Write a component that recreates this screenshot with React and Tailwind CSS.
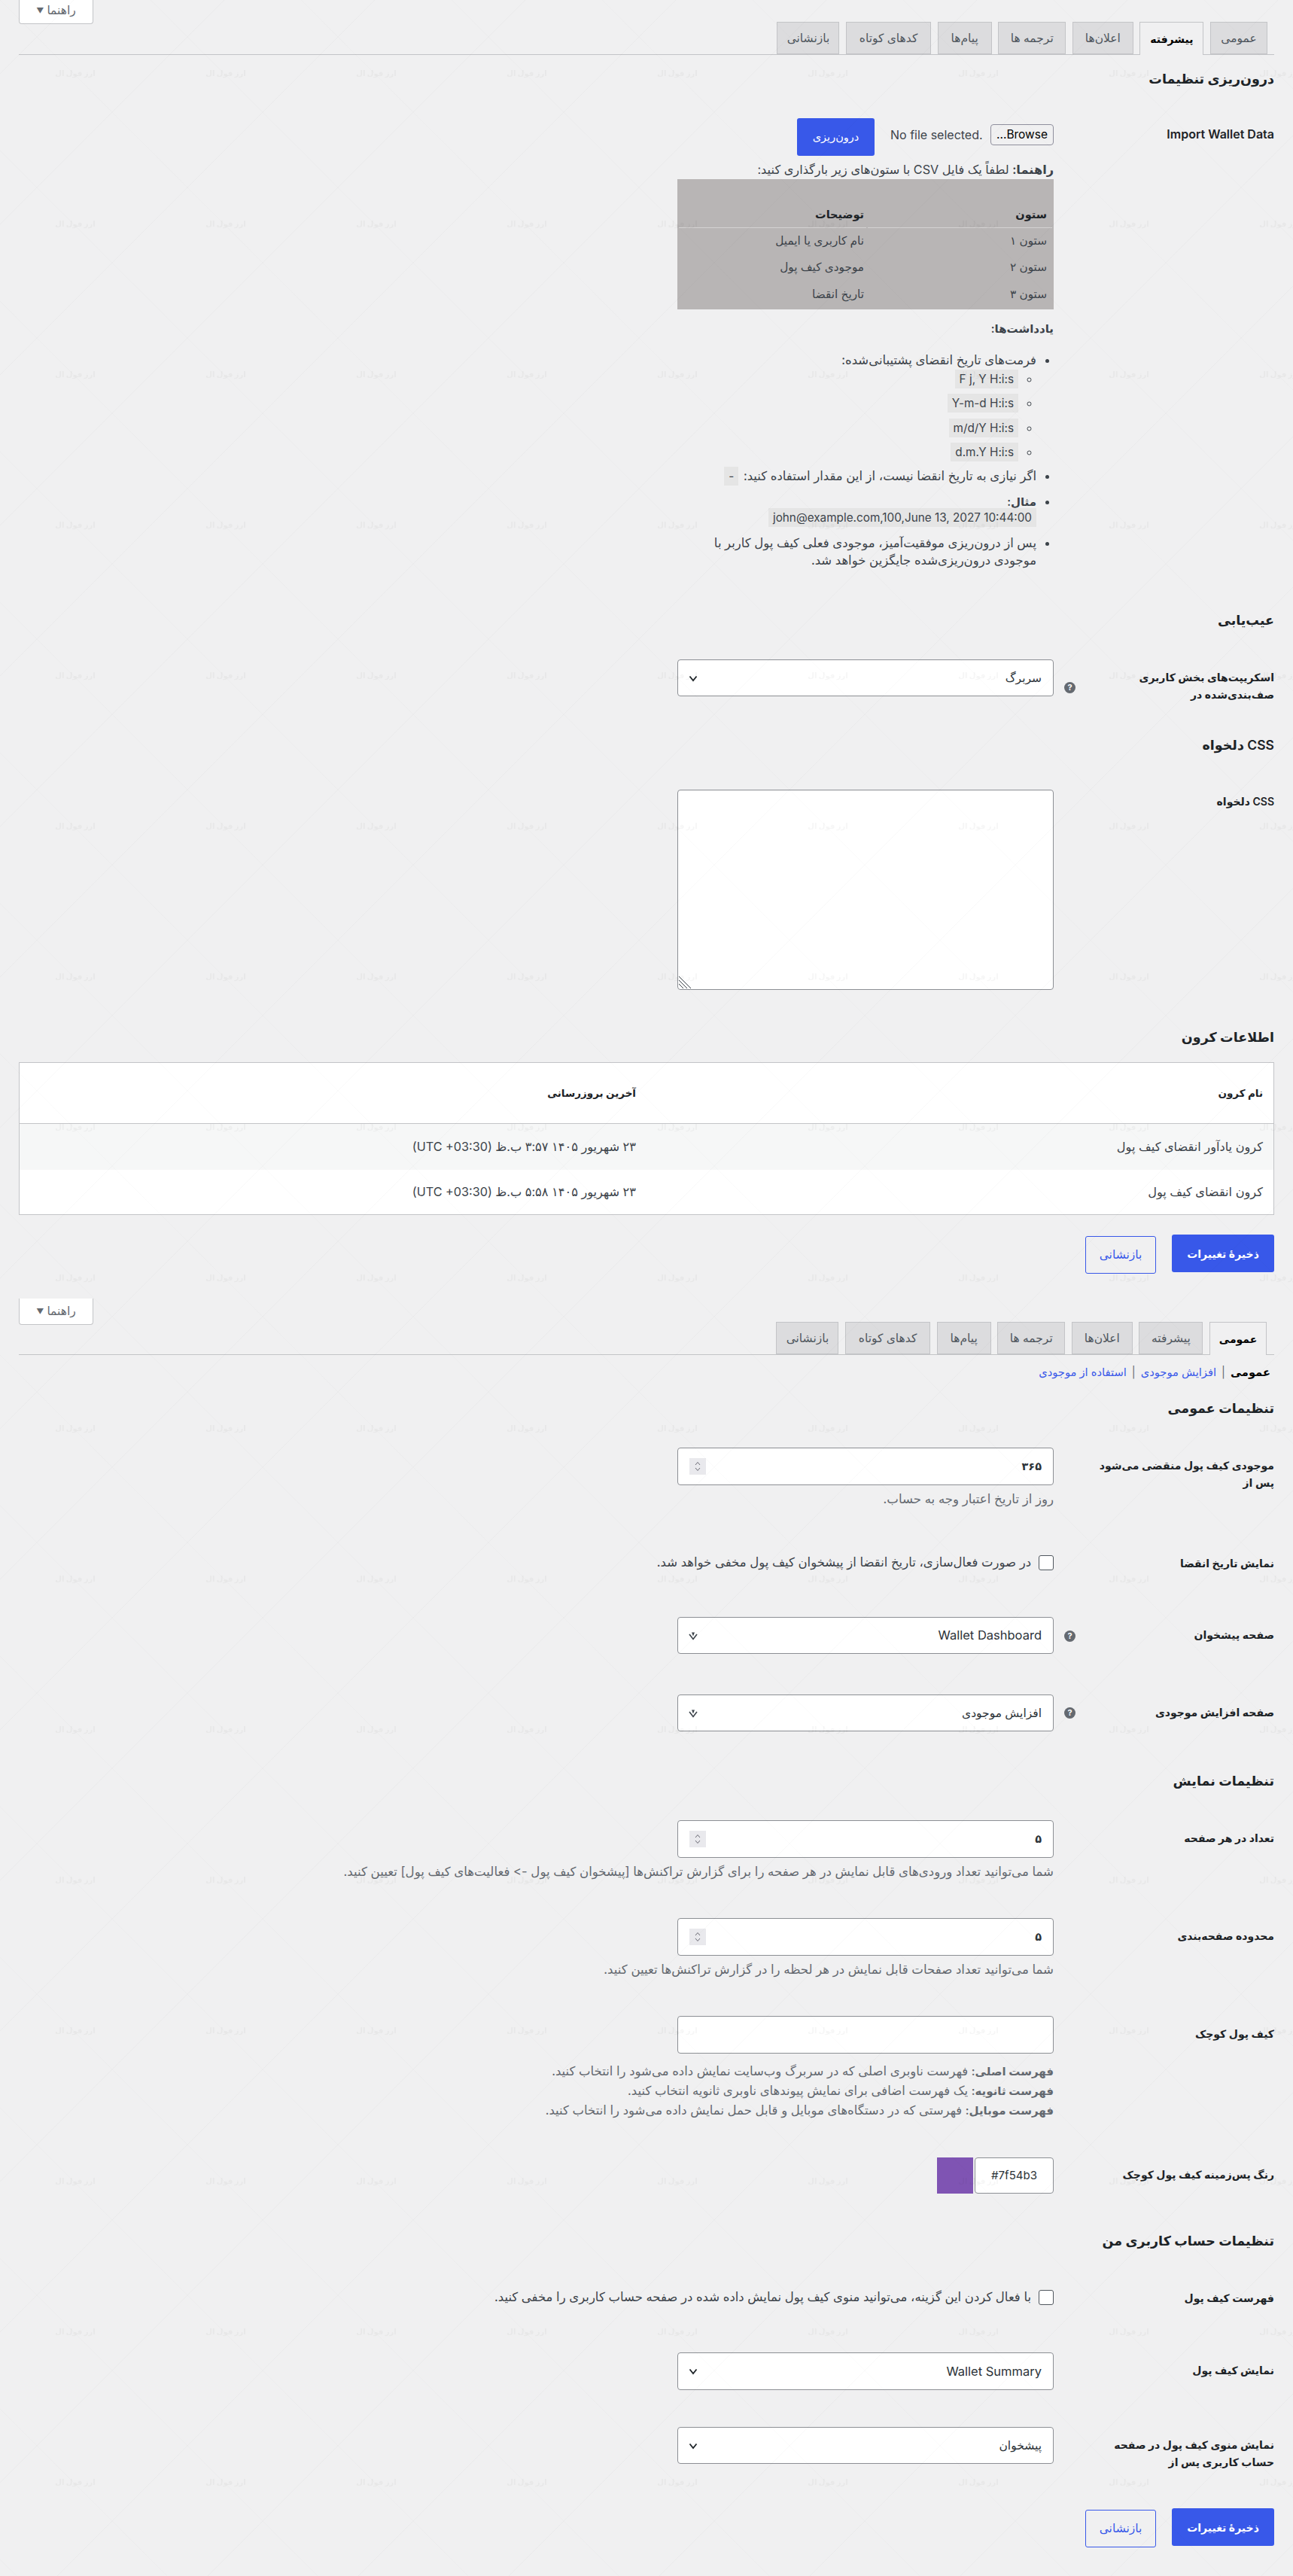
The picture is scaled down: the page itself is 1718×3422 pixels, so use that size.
import React from 'react';

const tabs = [
  { label: 'عمومی', w: 'w-[76px]' },
  { label: 'پیشرفته', w: 'w-[85px]' },
  { label: 'اعلان‌ها', w: 'w-[81px]' },
  { label: 'ترجمه ها', w: 'w-[90px]' },
  { label: 'پیام‌ها', w: 'w-[72px]' },
  { label: 'کدهای کوتاه', w: 'w-[113px]' },
  { label: 'بازنشانی', w: 'w-[83px]' },
];

function HelpToggle({ className }) {
  return (
    <div className={`flex justify-end ${className}`}>
      <button className="flex h-[35px] w-[99px] items-center justify-center gap-1 rounded-b border border-t-0 border-[#c3c4c7] bg-white text-[15.5px] text-[#646970]">
        <span>راهنما</span>
        <span className="text-[10px]">▼</span>
      </button>
    </div>
  );
}

function TabNav({ active, className }) {
  return (
    <div className={`flex h-[44px] gap-[8.6px] border-b border-[#c3c4c7] ${className}`}>
      {tabs.map((t) => (
        <div
          key={t.label}
          className={
            t.label === active
              ? `${t.w} z-10 flex h-[44px] items-center justify-center border border-b-0 border-[#c3c4c7] bg-[#f0f0f1] text-[14px] font-semibold text-black`
              : `${t.w} flex h-[43px] items-center justify-center border border-[#c3c4c7] bg-[#dcdcde] text-[15.5px] text-[#50575e]`
          }
        >
          {t.label}
        </div>
      ))}
    </div>
  );
}

function Heading({ children, className }) {
  return <h2 className={`h-[26px] text-[17.5px] leading-[26px] font-semibold text-[#1d2327] ${className}`}>{children}</h2>;
}

function HelpIcon({ className }) {
  return (
    <span className={`flex h-[15px] w-[15px] items-center justify-center rounded-full bg-[#646970] text-[11px] font-bold text-white ${className}`}>
      ?
    </span>
  );
}

function Row({ label, help, labelClass = 'pt-[12px]', className, children }) {
  return (
    <div className={`flex items-start ${className}`}>
      <div className="flex w-[293px] shrink-0 justify-between pl-[14px]">
        <div className={`text-[14px] leading-[23px] font-semibold text-[#1d2327] ${labelClass}`}>{label}</div>
        {help}
      </div>
      <div className="w-[500px]">{children}</div>
    </div>
  );
}

function Chevron() {
  return (
    <svg width="14" height="14" viewBox="0 0 14 14" fill="none" stroke="#1d2327" strokeWidth="1.8">
      <path d="M2.5 4.5 L7 10 L11.5 4.5" />
    </svg>
  );
}

function DoubleChevron() {
  return (
    <svg width="14" height="14" viewBox="0 0 14 14" fill="none" stroke="#3c434a" strokeWidth="1.6">
      <path d="M2 5 L7 11.5 L12 5" />
      <path d="M5 2.5 L7 7.5 L9 2.5" fill="#3c434a" stroke="none" />
    </svg>
  );
}

function SelectBox({ value, icon, latin, h = 'h-[49px]' }) {
  return (
    <div className={`flex ${h} items-center justify-between rounded-[4px] border border-[#8c8f94] bg-white pr-[15px] pl-[13px] ${latin ? 'text-[16.5px]' : 'text-[15.5px]'} text-[#2c3338]`}>
      <span>{value}</span>
      {icon || <Chevron />}
    </div>
  );
}

function NumberBox({ value, h = 'h-[50px]' }) {
  return (
    <div className={`flex ${h} items-center justify-between rounded-[4px] border border-[#8c8f94] bg-white pr-[15px] pl-[15px] text-[14.5px] text-[#2c3338]`}>
      <span className="font-semibold">{value}</span>
      <span className="flex h-[22px] w-[22px] flex-col items-center justify-center bg-[#e9e9ed]">
        <svg width="10" height="16" viewBox="0 0 10 16" fill="none" stroke="#6b6b75" strokeWidth="1">
          <path d="M2 6 L5 2.5 L8 6" />
          <path d="M2 10 L5 13.5 L8 10" />
        </svg>
      </span>
    </div>
  );
}

function Desc({ children, className }) {
  return <p className={`h-[23px] text-[16.6px] leading-[23px] text-[#646970] ${className}`}>{children}</p>;
}

function Code({ children, className }) {
  return (
    <code dir="ltr" className={`inline-block h-[25px] bg-[#e5e5e5] px-[6px] font-['Inter',sans-serif] text-[15.3px] leading-[25px] text-[#3c434a] ${className}`}>
      {children}
    </code>
  );
}

function CheckRow({ text }) {
  return (
    <div className="flex items-center gap-[10px] whitespace-nowrap text-[16.5px] leading-[21px] text-[#3c434a]">
      <input type="checkbox" readOnly className="h-[20px] w-[20px] shrink-0 appearance-none rounded-[3px] border border-[#50575e] bg-white" />
      <span>{text}</span>
    </div>
  );
}

function Actions({ className }) {
  return (
    <div className={`flex items-start gap-[21px] ${className}`}>
      <button className="h-[50px] w-[136px] rounded-[3px] bg-[#3858e9] text-[14px] font-semibold text-white">ذخیرهٔ تغییرات</button>
      <button className="mt-[2px] h-[50px] w-[94px] rounded-[3px] border border-[#3858e9] text-[15.5px] text-[#3858e9]">بازنشانی</button>
    </div>
  );
}

function Watermark() {
  return (
    <svg className="pointer-events-none absolute inset-0 z-20 h-full w-full">
      <defs>
        <pattern id="wm" width="200" height="200" patternUnits="userSpaceOnUse">
          <path d="M98 0 L0 98 M200 98 L98 200" stroke="#000" strokeOpacity="0.025" fill="none" />
          <path d="M0 0 L200 200" stroke="#000" strokeOpacity="0.016" fill="none" />
          <text x="100" y="101" textAnchor="middle" fontSize="10" fontWeight="700" fill="#000" fillOpacity="0.035" direction="rtl">ارز فول ال</text>
        </pattern>
      </defs>
      <rect width="100%" height="100%" fill="url(#wm)" />
    </svg>
  );
}

export default function App() {
  return (
    <div dir="rtl" className="relative h-[3422px] overflow-hidden bg-[#f0f0f1] px-[25px] font-['Inter','Noto_Sans','DejaVu_Sans',sans-serif] text-[16.5px] text-[#3c434a]">
      <Watermark />

      <HelpToggle className="-mt-[3px]" />
      <TabNav active="پیشرفته" className="-mt-[3px] pr-[9px]" />

      <Heading className="mt-[19px]">درون‌ریزی تنظیمات</Heading>

      <Row label={<span className="text-[16px]">Import Wallet Data</span>} labelClass="pt-[10px]" className="mt-[39px]">
        <div className="flex h-[50px] items-start">
          <button className="mt-[8px] h-[28px] w-[84px] rounded-[4px] border border-[#8f8f9d] bg-[#f0f0f1] text-[15.5px] text-black">Browse...</button>
          <span dir="ltr" className="mt-[11px] mr-[8px] w-[125px] whitespace-nowrap text-[16px] leading-[23px] text-[#3c434a]">No file selected.</span>
          <button className="mr-[21px] h-[50px] w-[103px] rounded-[3px] bg-[#3858e9] text-[14.5px] text-white">درون‌ریزی</button>
        </div>
        <p className="mt-[7px] h-[23px] text-[16.2px] leading-[23px]"><strong className="font-semibold">راهنما:</strong> لطفاً یک فایل CSV با ستون‌های زیر بارگذاری کنید:</p>
        <table className="mt-[1px] h-[173px] w-[500px] border-separate border-spacing-[2px] bg-[#b8b5b5] text-[15.3px] text-[#3c434a]">
          <thead>
            <tr>
              <th className="h-[63px] w-[245px] border-b border-[#d4d2d2] pr-[7px] pb-[6px] text-right align-bottom text-[14.5px] font-semibold text-[#1d2327]">ستون</th>
              <th className="h-[63px] border-b border-[#d4d2d2] pr-[3px] pb-[6px] text-right align-bottom text-[14.5px] font-semibold text-[#1d2327]">توضیحات</th>
            </tr>
          </thead>
          <tbody>
            <tr><td className="h-[33px] pr-[7px] pb-[3px]">ستون ۱</td><td className="pr-[3px] pb-[3px]">نام کاربری یا ایمیل</td></tr>
            <tr><td className="h-[33px] pr-[7px] pb-[3px]">ستون ۲</td><td className="pr-[3px] pb-[3px]">موجودی کیف پول</td></tr>
            <tr><td className="h-[33px] pr-[7px] pb-[1px]">ستون ۳</td><td className="pr-[3px] pb-[1px]">تاریخ انقضا</td></tr>
          </tbody>
        </table>
        <p className="mt-[14px] h-[23px] text-[15px] leading-[23px] font-semibold">یادداشت‌ها:</p>
        <ul className="mt-[19px] list-disc pr-[23px] leading-[23px]">
          <li className="h-[153px]">
            <span className="block h-[24px]">فرمت‌های تاریخ انقضای پشتیبانی‌شده:</span>
            <ul className="list-[circle] pr-[24px]">
              <li className="mb-[7px] h-[25px]"><Code>F j, Y H:i:s</Code></li>
              <li className="mb-[8px] h-[25px]"><Code>Y-m-d H:i:s</Code></li>
              <li className="mb-[7px] h-[25px]"><Code>m/d/Y H:i:s</Code></li>
              <li className="h-[25px]"><Code>d.m.Y H:i:s</Code></li>
            </ul>
          </li>
          <li className="h-[25px]">اگر نیازی به تاریخ انقضا نیست، از این مقدار استفاده کنید: <Code className="mr-[2px]">-</Code></li>
          <li className="mt-[10px] h-[45px]">
            <strong className="block h-[20px] text-[15px] font-semibold">مثال:</strong>
            <Code>john@example.com,100,June 13, 2027 10:44:00</Code>
          </li>
          <li className="mt-[10px] w-[445px]">پس از درون‌ریزی موفقیت‌آمیز، موجودی فعلی کیف پول کاربر با موجودی درون‌ریزی‌شده جایگزین خواهد شد.</li>
        </ul>
      </Row>

      <Heading className="mt-[55px]">عیب‌یابی</Heading>
      <Row
        label={<>اسکریپت‌های بخش کاربری<br />صف‌بندی‌شده در</>}
        help={<HelpIcon className="mt-[30px]" />}
        className="mt-[39px]"
      >
        <SelectBox value="سربرگ" />
      </Row>

      <Heading className="mt-[43px]">CSS دلخواه</Heading>
      <Row label="CSS دلخواه" labelClass="pt-[4px]" className="mt-[46px]">
        <div className="relative h-[266px] rounded-[4px] border border-[#8c8f94] bg-white">
          <svg className="absolute bottom-0 left-0" width="18" height="18" viewBox="0 0 18 18" stroke="#3c434a" strokeWidth="1">
            <path d="M1 1 L17 17 M1 6 L12 17 M1 11 L7 17" />
          </svg>
        </div>
      </Row>

      <Heading className="mt-[50px]">اطلاعات کرون</Heading>
      <table className="mt-[20px] h-[203px] w-full table-fixed border border-[#c3c4c7] bg-white">
        <thead>
          <tr className="h-[81px] border-b border-[#c3c4c7] text-[13.5px]">
            <th className="pr-[14px] text-right font-semibold text-[#1d2327]">نام کرون</th>
            <th className="pr-[14px] text-right font-semibold text-[#1d2327]">آخرین بروزرسانی</th>
          </tr>
        </thead>
        <tbody className="text-[16.2px]">
          <tr className="h-[61px] bg-[#f6f7f7]">
            <td className="pr-[14px]">کرون یادآور انقضای کیف پول</td>
            <td className="pr-[14px]">۲۳ شهریور ۱۴۰۵ ۳:۵۷ ب.ظ (UTC +03:30)</td>
          </tr>
          <tr className="h-[60px]">
            <td className="pr-[14px]">کرون انقضای کیف پول</td>
            <td className="pr-[14px]">۲۳ شهریور ۱۴۰۵ ۵:۵۸ ب.ظ (UTC +03:30)</td>
          </tr>
        </tbody>
      </table>

      <Actions className="mt-[26px]" />

      <HelpToggle className="mt-[33px]" />
      <TabNav active="عمومی" className="-mt-[4px] pr-[10px]" />

      <div className="mt-[13px] flex h-[20px] items-center gap-[7px] pr-[5px] text-[14.7px] text-[#3858e9]">
        <span className="font-semibold text-black">عمومی</span>
        <span className="text-[#646970]">|</span>
        <span>افزایش موجودی</span>
        <span className="text-[#646970]">|</span>
        <span>استفاده از موجودی</span>
      </div>

      <Heading className="mt-[25px]">تنظیمات عمومی</Heading>
      <Row label={<>موجودی کیف پول منقضی می‌شود<br />پس از</>} className="mt-[39px]">
        <NumberBox value="۳۶۵" />
        <Desc className="mt-[7px]">روز از تاریخ اعتبار وجه به حساب.</Desc>
      </Row>

      <Row label="نمایش تاریخ انقضا" labelClass="pt-0" className="mt-[62px]">
        <CheckRow text="در صورت فعال‌سازی، تاریخ انقضا از پیشخوان کیف پول مخفی خواهد شد." />
      </Row>

      <Row label="صفحه پیشخوان" help={<HelpIcon className="mt-[18px]" />} className="mt-[60px]">
        <SelectBox value="Wallet Dashboard" latin icon={<DoubleChevron />} />
      </Row>

      <Row label="صفحه افزایش موجودی" help={<HelpIcon className="mt-[17px]" />} className="mt-[54px]">
        <SelectBox value="افزایش موجودی" icon={<DoubleChevron />} />
      </Row>

      <Heading className="mt-[53px]">تنظیمات نمایش</Heading>
      <Row label="تعداد در هر صفحه" className="mt-[39px]">
        <NumberBox value="۵" />
        <Desc className="mt-[7px] whitespace-nowrap">شما می‌توانید تعداد ورودی‌های قابل نمایش در هر صفحه را برای گزارش تراکنش‌ها [پیشخوان کیف پول -&gt; فعالیت‌های کیف پول] تعیین کنید.</Desc>
      </Row>

      <Row label="محدوده صفحه‌بندی" className="mt-[50px]">
        <NumberBox value="۵" />
        <Desc className="mt-[7px] whitespace-nowrap">شما می‌توانید تعداد صفحات قابل نمایش در هر لحظه را در گزارش تراکنش‌ها تعیین کنید.</Desc>
      </Row>

      <Row label="کیف پول کوچک" className="mt-[50px]">
        <div className="h-[50px] rounded-[4px] border border-[#8c8f94] bg-white" />
        <div className="mt-[10px] whitespace-nowrap text-[16.5px] leading-[26px] text-[#646970]">
          <div className="h-[26px]"><strong className="text-[15px] font-semibold">فهرست اصلی:</strong> فهرست ناوبری اصلی که در سربرگ وب‌سایت نمایش داده می‌شود را انتخاب کنید.</div>
          <div className="h-[26px]"><strong className="text-[15px] font-semibold">فهرست ثانویه:</strong> یک فهرست اضافی برای نمایش پیوندهای ناوبری ثانویه انتخاب کنید.</div>
          <div className="h-[26px]"><strong className="text-[15px] font-semibold">فهرست موبایل:</strong> فهرستی که در دستگاه‌های موبایل و قابل حمل نمایش داده می‌شود را انتخاب کنید.</div>
        </div>
      </Row>

      <Row label="رنگ پس‌زمینه کیف پول کوچک" labelClass="pt-[11px]" className="mt-[50px]">
        <div className="flex items-start gap-[2px]">
          <div className="flex h-[48px] w-[105px] items-center justify-center rounded-[4px] border border-[#8c8f94] bg-white text-[15px] text-[#2c3338]">#7f54b3</div>
          <div className="h-[48px] w-[48px] bg-[#7f54b3]" />
        </div>
      </Row>

      <Heading className="mt-[50px]">تنظیمات حساب کاربری من</Heading>
      <Row label="فهرست کیف پول" labelClass="pt-0" className="mt-[51px]">
        <CheckRow text="با فعال کردن این گزینه، می‌توانید منوی کیف پول نمایش داده شده در صفحه حساب کاربری را مخفی کنید." />
      </Row>

      <Row label="نمایش کیف پول" className="mt-[61px]">
        <SelectBox value="Wallet Summary" latin h="h-[50px]" />
      </Row>

      <Row label={<>نمایش منوی کیف پول در صفحه<br />حساب کاربری پس از</>} className="mt-[49px]">
        <SelectBox value="پیشخوان" />
      </Row>

      <Actions className="mt-[50px]" />
    </div>
  );
}
